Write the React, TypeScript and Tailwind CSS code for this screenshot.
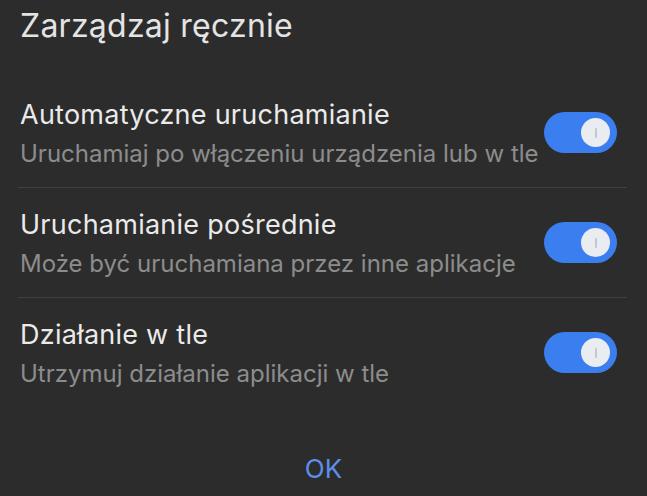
import React from "react";

const rows = [
  { t: "Automatyczne uruchamianie", s: "Uruchamiaj po włączeniu urządzenia lub w tle" },
  { t: "Uruchamianie pośrednie", s: "Może być uruchamiana przez inne aplikacje" },
  { t: "Działanie w tle", s: "Utrzymuj działanie aplikacji w tle" },
];

function Toggle() {
  return (
    <div className="flex h-[41px] w-[73px] shrink-0 items-center justify-end rounded-full bg-[#3b7ef0] pr-[7px]">
      <div className="flex h-[29px] w-[29px] items-center justify-center rounded-full bg-[#e9ecf1]">
        <div className="h-[10px] w-[2px] rounded-full bg-[#c4c7cc]" />
      </div>
    </div>
  );
}

export default function App() {
  return (
    <div
      className="h-[496px] w-[647px] overflow-hidden bg-[#2c2c2c]"
      style={{ fontFamily: "Inter, 'Noto Sans', sans-serif" }}
    >
      <div className="h-[78px] px-5 pt-[6px]">
        <div className="text-[32px] leading-[40px] tracking-[0.25px] text-[#e4e4e4]">Zarządzaj ręcznie</div>
      </div>
      {rows.map((r, i) => (
        <div key={i}>
          <div className="flex h-[109px] items-center justify-between pl-5 pr-[30px]">
            <div className="mt-[3px] flex flex-col">
              <div className="whitespace-nowrap text-[27px] leading-[32px] tracking-[0.25px] text-[#eaeaea]">{r.t}</div>
              <div className="mt-2 whitespace-nowrap text-[24px] leading-[30px] text-[#8c8c8c]">{r.s}</div>
            </div>
            <Toggle />
          </div>
          {i < 2 ? <div className="ml-[18px] mr-[20px] h-px bg-[#404040]" /> : null}
        </div>
      ))}
      <div className="flex justify-center pt-[46px]">
        <span className="text-[26px] leading-[32px] text-[#5d8fe9]">OK</span>
      </div>
    </div>
  );
}
